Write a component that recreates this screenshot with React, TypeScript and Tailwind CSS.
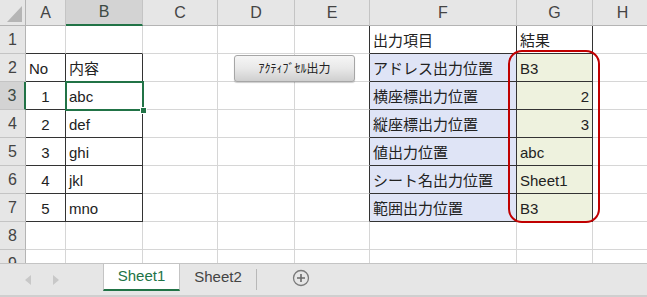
import React from 'react';

const cols = ['A', 'B', 'C', 'D', 'E', 'F', 'G', 'H'];
const rows = [1, 2, 3, 4, 5, 6, 7, 8, 9];

type Cell = { v: string; align?: 'l' | 'c' | 'r' };

const data: Record<string, Cell> = {
  A2: { v: 'No' },
  B2: { v: '内容' },
  A3: { v: '1', align: 'c' },
  A4: { v: '2', align: 'c' },
  A5: { v: '3', align: 'c' },
  A6: { v: '4', align: 'c' },
  A7: { v: '5', align: 'c' },
  B3: { v: 'abc' },
  B4: { v: 'def' },
  B5: { v: 'ghi' },
  B6: { v: 'jkl' },
  B7: { v: 'mno' },
  F1: { v: '出力項目' },
  G1: { v: '結果' },
  F2: { v: 'アドレス出力位置' },
  G2: { v: 'B3' },
  F3: { v: '横座標出力位置' },
  G3: { v: '2', align: 'r' },
  F4: { v: '縦座標出力位置' },
  G4: { v: '3', align: 'r' },
  F5: { v: '値出力位置' },
  G5: { v: 'abc' },
  F6: { v: 'シート名出力位置' },
  G6: { v: 'Sheet1' },
  F7: { v: '範囲出力位置' },
  G7: { v: 'B3' },
};

// ranges with a thin black frame
const framed = (c: number, r: number) =>
  (c >= 0 && c <= 1 && r >= 2 && r <= 7) || (c >= 5 && c <= 6 && r >= 1 && r <= 7);

function cellBg(c: number, r: number) {
  if (c === 5 && r >= 2 && r <= 7) return 'bg-[#dfe4f6]';
  if (c === 6 && r >= 2 && r <= 7) return 'bg-[#eef2de]';
  return 'bg-white';
}

function SheetCell({ c, r }: { c: number; r: number }) {
  const key = `${cols[c]}${r}`;
  const cell = data[key];
  const right = framed(c, r) || framed(c + 1, r) ? 'border-r-[#333]' : 'border-r-[#d6d6d6]';
  const bottom = framed(c, r) || framed(c, r + 1) ? 'border-b-[#333]' : 'border-b-[#d6d6d6]';
  const align =
    cell?.align === 'c' ? 'justify-center' : cell?.align === 'r' ? 'justify-end' : 'justify-start';
  return (
    <div
      className={`flex items-center border-r border-b px-[3px] pt-[1px] text-[15px] leading-none text-[#222] whitespace-nowrap overflow-hidden ${right} ${bottom} ${cellBg(c, r)} ${align}`}
    >
      {cell?.v}
    </div>
  );
}

export default function App() {
  return (
    <div
      className="w-[647px] h-[297px] overflow-hidden flex flex-col bg-white"
      style={{ fontFamily: '"Liberation Sans", "Noto Sans CJK JP", sans-serif' }}
    >
      <div className="relative h-[263px] overflow-hidden">
        <div className="grid grid-cols-[26px_40px_77px_75px_77px_75px_147px_76px_60px] grid-rows-[26px_repeat(9,28px)]">
          {/* corner */}
          <div className="flex items-end justify-end border-r border-b border-[#b4b4b4] bg-[#e6e6e6] pr-[3px] pb-[3px]">
            <svg width="15" height="16" viewBox="0 0 15 16">
              <polygon points="15,0 15,16 0,16" fill="#b5b5b5" />
            </svg>
          </div>
          {cols.map((col, i) => (
            <div
              key={col}
              className={
                i === 1
                  ? 'flex items-center justify-center border-r border-r-[#c4c4c4] border-b-2 border-b-[#217346] bg-[#d3d3d3] text-[16px] text-[#3c4a44]'
                  : 'flex items-center justify-center border-r border-r-[#c4c4c4] border-b border-b-[#b4b4b4] bg-[#e6e6e6] text-[16px] text-[#444]'
              }
            >
              {col}
            </div>
          ))}
          {rows.map((r) => (
            <React.Fragment key={r}>
              <div
                className={
                  r === 3
                    ? 'flex items-center justify-center border-r-2 border-r-[#217346] border-b border-b-[#c4c4c4] bg-[#d3d3d3] text-[16px] text-[#3c4a44]'
                    : 'flex items-center justify-center border-r border-r-[#b4b4b4] border-b border-b-[#c4c4c4] bg-[#e6e6e6] text-[16px] text-[#444]'
                }
              >
                {r}
              </div>
              {cols.map((_, c) => (
                <SheetCell key={c} c={c} r={r} />
              ))}
            </React.Fragment>
          ))}
        </div>

        {/* active cell B3 */}
        <div className="absolute left-[65px] top-[81px] w-[79px] h-[30px] border-2 border-[#217346] pointer-events-none" />
        <div className="absolute left-[140px] top-[107px] w-[7px] h-[7px] bg-[#217346] border border-white" />

        {/* form button */}
        <button className="absolute left-[234px] top-[55px] w-[121px] h-[27px] rounded-[3px] border border-[#a6a6a6] bg-gradient-to-b from-[#f6f6f6] via-[#e8e8e8] to-[#cfcfcf] text-[12px] leading-none text-[#222] shadow-[0_1px_1px_rgba(0,0,0,0.2)]">
          ｱｸﾃｨﾌﾞｾﾙ出力
        </button>

        {/* red highlight */}
        <div className="absolute left-[508px] top-[50px] w-[92px] h-[173px] rounded-[14px] border-[2.5px] border-[#c00000] pointer-events-none" />
      </div>

      {/* sheet tabs */}
      <div className="h-[34px] flex items-stretch bg-[#e6e6e6] border-t border-[#c4c4c4] border-b-2 border-b-[#cfcfcf] text-[15px]">
        <div className="w-[103px] flex items-center gap-[20px] pl-[24px] text-[#c6c6c6]">
          <svg width="8" height="10" viewBox="0 0 8 10">
            <polygon points="7,0 7,10 1,5" fill="#c8c8c8" />
          </svg>
          <svg width="8" height="10" viewBox="0 0 8 10">
            <polygon points="1,0 1,10 7,5" fill="#c8c8c8" />
          </svg>
        </div>
        <div className="w-[77px] flex items-center justify-center bg-white border-b-2 border-[#217346] text-[#217346] mb-[4px] border-l border-l-[#c4c4c4] border-r border-r-[#c4c4c4]">
          Sheet1
        </div>
        <div className="w-[76px] flex items-center justify-center text-[#444] pb-[4px]">Sheet2</div>
        <div className="w-px my-[5px] bg-[#b8b8b8]" />
        <div className="w-[88px] flex items-center justify-center pb-[4px]">
          <svg width="18" height="18" viewBox="0 0 18 18">
            <circle cx="9" cy="9" r="7.5" fill="none" stroke="#7a7a7a" strokeWidth="1.3" />
            <path d="M9 5v8M5 9h8" stroke="#6a6a6a" strokeWidth="1.6" />
          </svg>
        </div>
        <div className="flex-1" />
      </div>
    </div>
  );
}
